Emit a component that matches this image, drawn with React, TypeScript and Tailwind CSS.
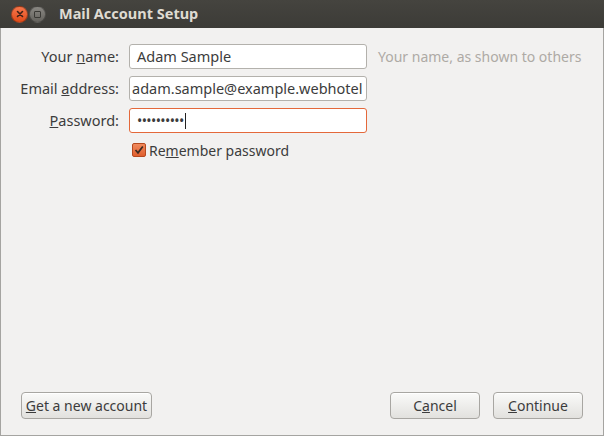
import React from 'react';

const font = { fontFamily: '"Noto Sans", "Open Sans", sans-serif' };

const Field = ({ label, children }: { label: React.ReactNode; children: React.ReactNode }) => (
  <div className="flex items-center h-[25px]">
    <label className="w-[118px] text-right text-[14.5px] text-[#3c3c3c] shrink-0">{label}</label>
    <div className="ml-[10px] flex items-center">{children}</div>
  </div>
);

const Button = ({ children, className = '' }: { children: React.ReactNode; className?: string }) => (
  <button
    className={
      'h-[27px] rounded-[4px] border border-[#a8a6a2] bg-gradient-to-b from-[#fafaf9] to-[#e2e1de] text-[14px] text-[#3c3c3c] shadow-[inset_0_1px_0_#fff] ' +
      className
    }
  >
    {children}
  </button>
);

export default function App() {
  return (
    <div className="w-[604px] h-[436px] flex flex-col bg-[#f2f1f0] select-none" style={font}>
      <div className="h-[28px] shrink-0 flex items-center bg-gradient-to-b from-[#45443f] to-[#3c3b37] pl-[11px]">
        <div className="w-[17px] h-[17px] rounded-full bg-gradient-to-b from-[#f6764a] to-[#df4a16] border border-[#3a1a0d]/40 flex items-center justify-center">
          <svg width="8" height="8" viewBox="0 0 8 8">
            <path d="M1.5 1.5 L6.5 6.5 M6.5 1.5 L1.5 6.5" stroke="#3c2017" strokeWidth="1.6" strokeLinecap="round" />
          </svg>
        </div>
        <div className="ml-[1px] w-[17px] h-[17px] rounded-full bg-gradient-to-b from-[#8a8883] to-[#64625d] border border-black/30 flex items-center justify-center">
          <div className="w-[7px] h-[7px] border border-[#3a3935] rounded-[1px]" />
        </div>
        <span className="ml-[13px] text-[14.5px] font-bold text-[#dfdbd2]">Mail Account Setup</span>
      </div>

      <div className="flex-1 flex flex-col border-l border-r border-b border-[#a5a4a1]">
        <div className="pt-[16px] flex flex-col gap-[7px]">
          <Field label={<>Your <u>n</u>ame:</>}>
            <div className="w-[238px] h-[25px] rounded-[3px] border border-[#b3b1ac] bg-white px-[7px] flex items-center text-[14.5px] text-[#3c3c3c]">
              Adam Sample
            </div>
            <span className="ml-[11px] text-[14px] text-[#aeaaa5] whitespace-nowrap">Your name, as shown to others</span>
          </Field>
          <Field label={<>Email <u>a</u>ddress:</>}>
            <div className="w-[238px] h-[25px] rounded-[3px] border border-[#b3b1ac] bg-white pl-[2px] flex items-center text-[14.5px] text-[#3c3c3c] overflow-hidden whitespace-nowrap">
              adam.sample@example.webhotel
            </div>
          </Field>
          <Field label={<><u>P</u>assword:</>}>
            <div className="w-[238px] h-[25px] rounded-[3px] border border-[#e4683a] bg-white pl-[7px] flex items-center text-[14px] text-[#3c3c3c] tracking-[-0.6px]">
              ••••••••••
              <span className="ml-[1px] w-[1px] h-[16px] bg-[#222]" />
            </div>
          </Field>
          <div className="flex items-center h-[20px] ml-[131px]">
            <div className="w-[14px] h-[14px] rounded-[2px] bg-gradient-to-b from-[#f08a5d] to-[#e05e2c] border border-[#b5491f] flex items-center justify-center">
              <svg width="10" height="10" viewBox="0 0 10 10">
                <path d="M1.5 5 L4 7.8 L8.8 1.5" stroke="#3a2a22" strokeWidth="1.7" fill="none" />
              </svg>
            </div>
            <span className="ml-[3px] text-[14px] text-[#3c3c3c]">Re<u>m</u>ember password</span>
          </div>
        </div>

        <div className="mt-auto flex items-center px-[20px] pb-[16px]">
          <Button className="w-[131px]"><u>G</u>et a new account</Button>
          <div className="flex-1" />
          <Button className="w-[90px]">C<u>a</u>ncel</Button>
          <Button className="w-[90px] ml-[13px]"><u>C</u>ontinue</Button>
        </div>
      </div>
    </div>
  );
}
